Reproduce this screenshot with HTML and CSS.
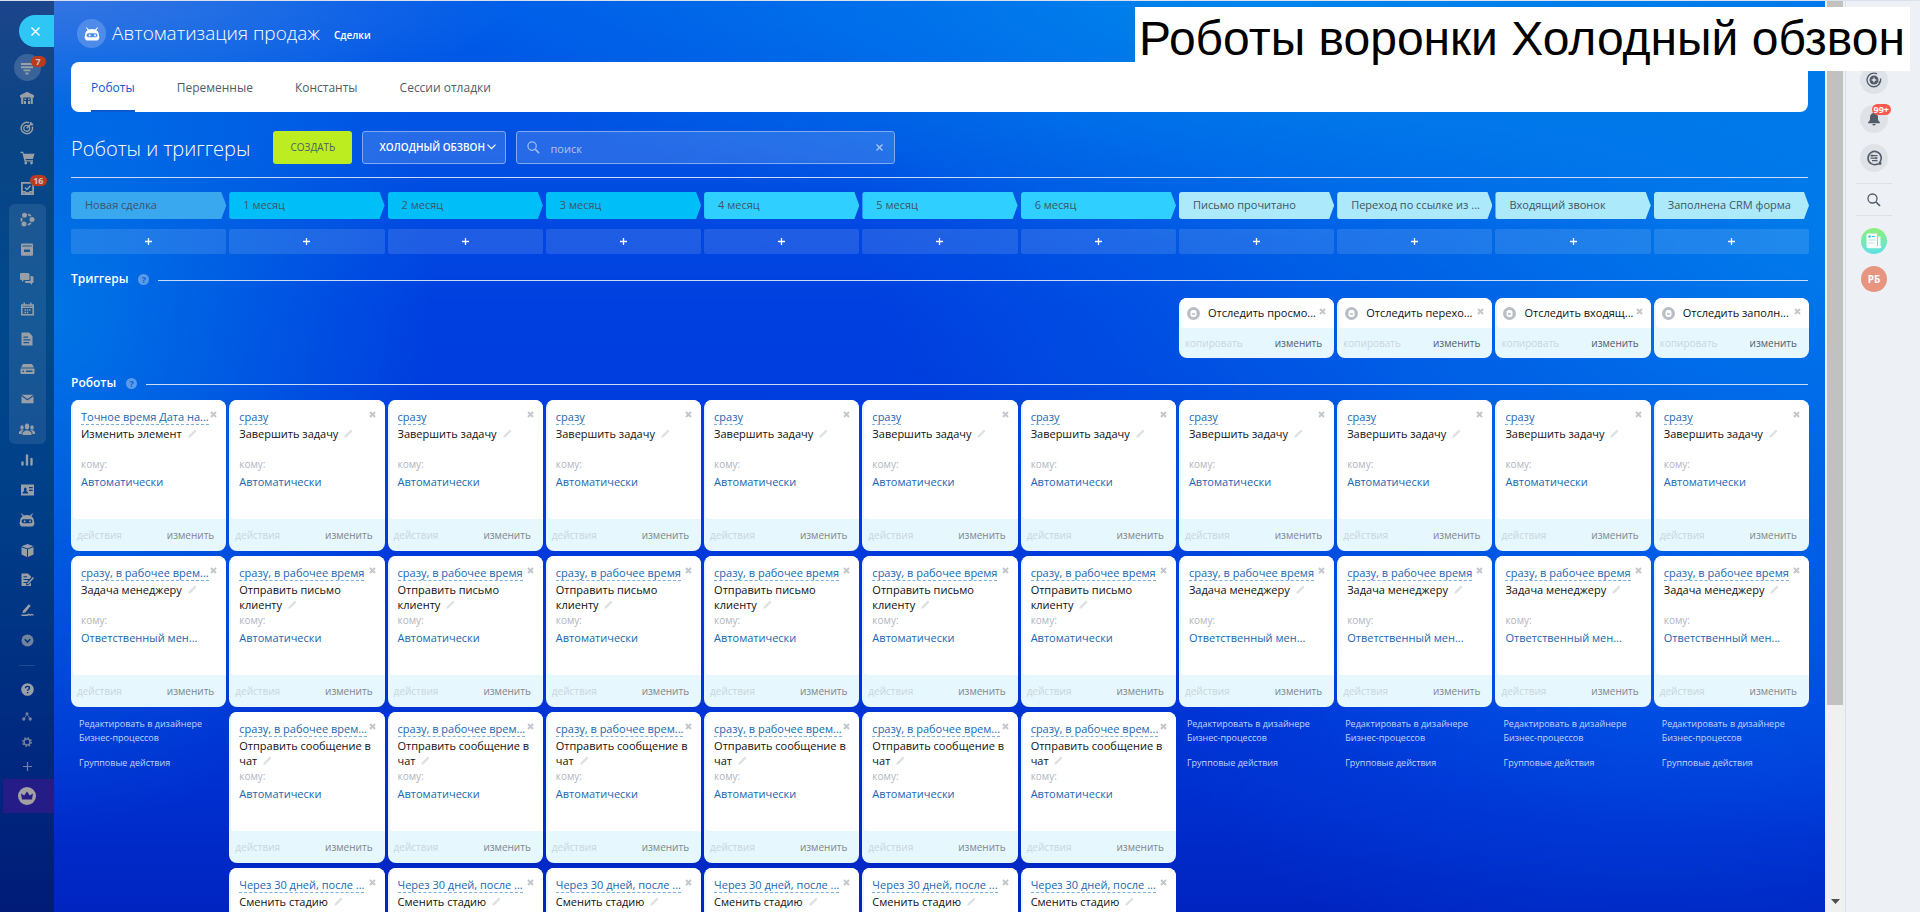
FILE: index.html
```html
<!DOCTYPE html>
<html lang="ru">
<head>
<meta charset="utf-8">
<title>Автоматизация продаж</title>
<link rel="stylesheet" href="styles.css">
</head>
<body>
<svg width="0" height="0" class="sprite" aria-hidden="true">
  <symbol id="robot" viewBox="0 0 16 14"><path fill="currentColor" fill-rule="evenodd" d="M2.6.2 4.8 2.6C6.700 1.900 9.300 1.900 11.200 2.600L13.400.2 14 .8 12.300 3.300C14.300 4.600 15 6.500 15 8.500V9C15.600 9.300 15.600 11 15 11.400 14.600 13 13.500 13.600 12 13.600H4C2.500 13.600 1.400 13 1 11.400.4 11 .4 9.300 1 9V8.500C1 6.500 1.700 4.600 3.700 3.300L2 .8ZM4.500 6.300C2.900 6.300 2.600 7.400 2.600 8.300S3.200 10.300 4.500 10.300H11.500C12.800 10.300 13.400 9.300 13.400 8.300S13.100 6.300 11.500 6.300ZM5.300 7.400a1 1 0 1 1 0 1.900 1 1 0 0 1 0-1.900ZM10.700 7.400a1 1 0 1 1 0 1.900 1 1 0 0 1 0-1.900Z"/></symbol>
  <symbol id="lens" viewBox="0 0 14 14"><circle cx="5.500" cy="5.500" r="4.500" fill="none" stroke="currentColor" stroke-width="1.300"/><path d="m9 9 4 4" stroke="currentColor" stroke-width="1.700"/></symbol>
</svg>
<div class="app">
  <nav class="sidebar" aria-label="Главное меню">
    <button class="close" aria-label="Закрыть"><svg width="9" height="9" viewBox="0 0 9 9"><path d="m.5.5 8 8m0-8-8 8" stroke="#fff" stroke-width="1.400"/></svg></button>
    <a class="item round" href="#" aria-label="Фильтр"><svg width="14" height="14" viewBox="0 0 14 14"><path d="M1 3h12M1 6.200h12M3.500 9.400h7M5.500 12.500h3" stroke="currentColor" stroke-width="1.900"/></svg><span class="badge">7</span></a>
    <a class="item" href="#" aria-label="Главная"><svg width="14" height="14" viewBox="0 0 14 14"><path fill="currentColor" fill-rule="evenodd" d="M7 .8 14 4.200V6.500H12.800V13H1.200V6.500H0V4.200ZM3.300 6.500V13H4V10H6V13H8V10H10V13H10.700V6.500ZM4.500 7.500H6V9H4.500ZM8 7.500H9.500V9H8Z"/></svg></a>
    <a class="item" href="#" aria-label="Цели"><svg width="14" height="14" viewBox="0 0 14 14" fill="none" stroke="currentColor"><path d="M9 1.800A5.700 5.700 0 1 0 12.300 5.500" stroke-width="1.500"/><circle cx="6.700" cy="7.300" r="3" stroke-width="1.200"/><path d="M6.700 7.300 12 2M10.500 1l.3 2.300 2.500.3" stroke-width="1.500"/></svg></a>
    <a class="item" href="#" aria-label="Магазин"><svg width="15" height="14" viewBox="0 0 15 14"><path fill="currentColor" d="M.5.8H3l.9 2H14.500L12.900 8H5.500l.2 1.200H13v1.300H4.500L2.400 2.100H.5Z"/><circle cx="5.800" cy="12" r="1.400" fill="currentColor"/><circle cx="11.500" cy="12" r="1.400" fill="currentColor"/></svg></a>
    <a class="item" href="#" aria-label="Задачи"><svg width="13" height="13" viewBox="0 0 13 13" fill="none" stroke="currentColor"><path d="M.9.900H12.100V12.100H.9ZM1 9.800H4L5 11H8L9 9.800H12" stroke-width="1.700"/><path d="m4 5.500 2 2L9.500 3.800" stroke-width="1.500"/></svg><span class="badge">16</span></a>
    <div class="group">
      <a class="item" href="#" aria-label="CRM"><svg width="15" height="15" viewBox="0 0 15 15"><g fill="currentColor"><circle cx="4.500" cy="3.200" r="2.500"/><circle cx="12" cy="7.500" r="2.500"/><circle cx="4" cy="12" r="2.500"/></g><path d="M8 2.300 11 4M8 13l3-2M1.500 6v3.500" stroke="currentColor" stroke-width="1.800"/></svg></a>
      <a class="item" href="#" aria-label="Лента"><svg width="12" height="13" viewBox="0 0 12 13"><path fill="currentColor" fill-rule="evenodd" d="M0 1.500Q0 .5 1 .5H11Q12 .5 12 1.500V12Q12 12.800 11 12.800H1Q0 12.800 0 12ZM1.300 3.500H10.700V2.500H1.300ZM3 6.500V9H9V6.500Z"/></svg></a>
      <a class="item" href="#" aria-label="Чаты"><svg width="14" height="14" viewBox="0 0 14 14"><path fill="currentColor" d="M1 1H8Q9.500 1 9.500 2.500V7Q9.500 8 8.500 8H4L2 10V8H1Q0 8 0 7V2Q0 1 1 1ZM10.500 4H12Q13.500 4 13.500 5.500V10Q13.500 11 12.500 11H12V13L10 11H6Q5 11 4.800 9H9.500Q10.500 9 10.500 8Z"/></svg></a>
      <a class="item" href="#" aria-label="Календарь"><svg width="13" height="14" viewBox="0 0 13 14"><path fill="none" stroke="currentColor" stroke-width="1.500" d="M.8 3H12.200V12.800H.8ZM3.300.5V4M9.700.5V4M1 5.300H12"/><path d="M3.500 8h6M3.500 10.500h4" stroke="currentColor" stroke-width="1.400" stroke-dasharray="1.500 .8"/></svg></a>
      <a class="item" href="#" aria-label="Документы"><svg width="12" height="14" viewBox="0 0 12 14"><path fill="currentColor" fill-rule="evenodd" d="M1 .5H8L11.500 4V13.500H1Q.5 13.500.5 13V1Q.5.5 1 .5ZM2.500 4.500V5.700H7V4.500ZM2.500 7.200V8.400H9.500V7.200ZM2.500 10V11.200H8V10Z"/></svg></a>
      <a class="item" href="#" aria-label="Диск"><svg width="15" height="12" viewBox="0 0 15 12"><path fill="currentColor" fill-rule="evenodd" d="M3 1H12L14 4.500H1ZM.5 5.500H14.500V10Q14.500 11 13.500 11H1.500Q.5 11 .5 10ZM2.500 7.500V9H4V7.500ZM6 7.500V9H12.500V7.500Z"/></svg></a>
      <a class="item" href="#" aria-label="Почта"><svg width="13" height="10" viewBox="0 0 13 10"><path fill="currentColor" d="M.5.8H12.500L6.500 5ZM.5 2.300 6.500 6.500 12.500 2.300V9.200H.5Z"/></svg></a>
      <a class="item" href="#" aria-label="Группы"><svg width="16" height="13" viewBox="0 0 16 13" fill="currentColor"><ellipse cx="8" cy="3.500" rx="2.200" ry="2.900"/><ellipse cx="3" cy="4.500" rx="1.700" ry="2.200"/><ellipse cx="13" cy="4.500" rx="1.700" ry="2.200"/><path d="M3.500 12V9.500L6.500 7.500H9.500L12.500 9.500V12ZM0 11V9L2 7.300H5L2.700 9V11ZM16 11V9L14 7.300H11L13.300 9V11Z"/></svg></a>
    </div>
    <a class="item" href="#" aria-label="Аналитика"><svg width="12" height="12" viewBox="0 0 12 12"><path stroke="currentColor" stroke-width="2.400" stroke-linecap="round" d="M1.500 8.500v2M6 1.500v9M10.500 5v5.500"/></svg></a>
    <a class="item" href="#" aria-label="Контакты"><svg width="13" height="12" viewBox="0 0 13 12"><path fill="currentColor" fill-rule="evenodd" d="M0 .5H13V11.500H0ZM1.300 9.500H7.300Q7 7.500 5.300 7 6 5.500 5.300 4 4.300 2.800 3.300 4 2.600 5.500 3.300 7 1.500 7.500 1.300 9.500ZM8 3V4.300H11.700V3ZM8 5.700V7H11.700V5.700Z"/></svg></a>
    <a class="item" href="#" aria-label="Роботы"><svg width="16" height="14"><use href="#robot"/></svg></a>
    <a class="item" href="#" aria-label="Склад"><svg width="13" height="13" viewBox="0 0 13 13" fill="currentColor"><path d="M6.500 0 12.500 2.200 6.500 4.500.5 2.200ZM.5 3.200 6 5.300V13L.5 10.500ZM12.500 3.200 7 5.300V13L12.500 10.500Z"/></svg></a>
    <a class="item" href="#" aria-label="Подпись"><svg width="13" height="14" viewBox="0 0 13 14"><path fill="currentColor" fill-rule="evenodd" d="M.5.500H7L10 3.500V4.500L8.500 6H2.500V7H7.500L6 9H2.500V10H5.500L5 12.500 7.500 12 10 9.500V13H.5ZM2.500 3.200V4.200H6V3.200Z"/><path d="m6.500 11 6-6.500" stroke="currentColor" stroke-width="1.500"/></svg></a>
    <a class="item" href="#" aria-label="Маркер"><svg width="13" height="13" viewBox="0 0 13 13"><path fill="currentColor" d="M7.800.3 9.700 1.700 4.300 8.500 1.500 9.300 2 6.800ZM.5 10.500H6Q8 8.500 9 10.500 10.500 9 12.500 10.500V11.800Q10.500 10.500 9 12 8 10.500 6.500 12H.5Z"/></svg></a>
    <a class="item dim" href="#" aria-label="Ещё"><svg width="13" height="13" viewBox="0 0 13 13"><circle cx="6.500" cy="6.500" r="6" fill="currentColor"/><path d="m3.800 5.300 2.700 2.700 2.700-2.700" fill="none" stroke="#00357f" stroke-width="1.600"/></svg></a>
    <hr class="side-rule">
    <a class="item" href="#" aria-label="Помощь"><svg width="13" height="13" viewBox="0 0 13 13"><circle cx="6.500" cy="6.500" r="6.300" fill="currentColor"/><path d="M4.500 5.200Q4.500 3.400 6.500 3.400T8.500 5.100Q8.500 6 7.300 6.500 6.600 6.900 6.600 7.800M6.600 8.900v1.400" fill="none" stroke="#002e7f" stroke-width="1.400"/></svg></a>
    <a class="item small dim" href="#" aria-label="Структура"><svg width="10" height="9" viewBox="0 0 10 9" fill="currentColor"><circle cx="5" cy="1.700" r="1.500"/><circle cx="1.800" cy="7" r="1.700"/><circle cx="8.200" cy="7" r="1.700"/><path d="M5 2 2 7M5 2l3 5" stroke="currentColor" stroke-width=".8"/></svg></a>
    <a class="item small dim" href="#" aria-label="Настройки"><svg width="10" height="10" viewBox="0 0 10 10"><circle cx="5" cy="5" r="3" fill="none" stroke="currentColor" stroke-width="1.500"/><circle cx="5" cy="5" r="4.300" fill="none" stroke="currentColor" stroke-width="1.400" stroke-dasharray="1.700 1.677"/></svg></a>
    <a class="item small dim" href="#" aria-label="Добавить"><svg width="9" height="9" viewBox="0 0 9 9"><path d="M4.500 0v9M0 4.500h9" stroke="currentColor" stroke-width="1.200"/></svg></a>
    <a class="crown" href="#" aria-label="Тариф"><svg width="18" height="18" viewBox="0 0 18 18"><circle cx="9" cy="9" r="9" fill="#a3a1a0"/><path d="M4 12.500 3 6.500 6.200 8.500 9 4.500 11.800 8.500 15 6.500 14 12.500Z" fill="#251c88"/></svg></a>
  </nav>

  <main class="panel">
    <header class="head">
      <span class="head-icon"><svg width="16" height="14"><use href="#robot"/></svg></span>
      <h1>Автоматизация продаж</h1>
      <a href="#">Сделки</a>
    </header>
    <nav class="tabs" aria-label="Разделы">
      <a class="active" href="#">Роботы</a><a href="#">Переменные</a><a href="#">Константы</a><a href="#">Сессии отладки</a>
    </nav>
    <div class="toolbar">
      <h2>Роботы и триггеры</h2>
      <button class="create">СОЗДАТЬ</button>
      <label class="funnel"><select aria-label="Воронка"><option>ХОЛОДНЫЙ ОБЗВОН</option></select><svg width="9" height="6" viewBox="0 0 9 6"><path d="m.5.700 4 4 4-4" fill="none" stroke="#fff" stroke-width="1.200"/></svg></label>
      <div class="search"><svg width="13" height="13"><use href="#lens"/></svg><input type="text" aria-label="Поиск" placeholder="поиск"><button aria-label="Очистить"><svg width="7" height="7" viewBox="0 0 7 7"><path d="m.5.5 6 6m0-6-6 6" stroke="#a9c6f6" stroke-width="1.300"/></svg></button></div>
    </div>
    <div class="cols stages" id="stages"></div>
    <div class="cols adders" id="adders"></div>
    <div class="section"><h3>Триггеры</h3><button class="hint" aria-label="Справка о триггерах">?</button></div>
    <div class="cols triggers" id="triggers"></div>
    <div class="section"><h3>Роботы</h3><button class="hint" aria-label="Справка о роботах">?</button></div>
    <div class="cols robots" id="robots"></div>
  </main>

  <div class="scroll" aria-hidden="true"><div class="thumb"></div><svg width="9" height="5" viewBox="0 0 9 5"><path d="M0 0h9L4.500 5Z" fill="#505050"/></svg></div>

  <aside class="dock">
    <button class="disc" aria-label="Копилот"><svg width="16" height="16" viewBox="0 0 16 16"><circle cx="8" cy="8" r="4.500" fill="#525c69"/><path d="M14.500 6.500A6.800 6.800 0 1 1 11 1.900M14.800 7.500Q14.500 10.500 12.500 10.500" fill="none" stroke="#525c69" stroke-width="1.300"/><path d="m8 5 .9 2.100L11 8l-2.100.9L8 11l-.9-2.100L5 8l2.100-.9Z" fill="#dfe3e8"/></svg></button>
    <button class="disc" aria-label="Уведомления"><svg width="12" height="14" viewBox="0 0 12 14"><path fill="#525c69" d="M6 0Q7 0 7 1 10 2 10 5.500V8L12 10.500V11.200H0V10.500L2 8V5.500Q2 2 5 1 5 0 6 0ZM4.300 12H7.700Q7.500 13.500 6 13.500T4.300 12Z"/></svg><span class="badge">99+</span></button>
    <button class="disc" aria-label="Чаты"><svg width="16" height="16" viewBox="0 0 16 16" fill="none" stroke="#525c69"><path d="M13 13A6.600 6.600 0 1 0 11.500 14H14.500V12" stroke-width="1.600"/><path d="M4.500 5.700h7M4.500 8.200h7M6 10.700h5.500" stroke-width="1.200"/><path d="M6 4.500v2.300M10 7v2.300" stroke-width="1.200"/></svg></button>
    <hr>
    <button class="find" aria-label="Поиск"><svg width="14" height="14"><use href="#lens"/></svg></button>
    <hr>
    <button class="face feed" aria-label="Новости"><svg width="16" height="16" viewBox="0 0 16 16"><path d="M2 .5H11V13H15.500Q15.500 15.300 13.500 15.300H2Q.5 15.300.5 13.500V2Q.5.5 2 .5ZM12 3.500h2.500V13H12Z" fill="#f4fffb"/><circle cx="3.500" cy="3.500" r="1.200" fill="#38bdf0"/><path d="M6 3.500h3" stroke="#38bdf0"/><path d="M2.500 7h7M2.500 10h5" stroke="#cfd8da"/></svg></button>
    <button class="face user">РБ</button>
  </aside>
  <div class="caption">Роботы воронки Холодный обзвон</div>
</div>
<script src="app.js"></script>
</body>
</html>
```
FILE: app.js
```js
const stages = [
  ['Новая сделка', 'new'],
  ['1 месяц', 'early'], ['2 месяц', 'early'], ['3 месяц', 'early'],
  ['4 месяц', 'late'], ['5 месяц', 'late'], ['6 месяц', 'late'],
  ['Письмо прочитано', 'event', 'Отследить просмо...'],
  ['Переход по ссылке из ...', 'event', 'Отследить перехо...'],
  ['Входящий звонок', 'event', 'Отследить входящ...'],
  ['Заполнена CRM форма', 'event', 'Отследить заполн...']
];

const finish = ['сразу', 'Завершить задачу', 'Автоматически'];
const monthly = [
  finish,
  ['сразу, в рабочее время', 'Отправить письмо клиенту', 'Автоматически'],
  ['сразу, в рабочее врем...', 'Отправить сообщение в чат', 'Автоматически'],
  ['Через 30 дней, после ...', 'Сменить стадию', 'Автоматически']
];
const robots = {
  new: [
    ['Точное время Дата на...', 'Изменить элемент', 'Автоматически'],
    ['сразу, в рабочее врем...', 'Задача менеджеру', 'Ответственный мен...']
  ],
  early: monthly,
  late: monthly,
  event: [finish, ['сразу, в рабочее время', 'Задача менеджеру', 'Ответственный мен...']]
};

const cross = '<button class="remove" aria-label="Удалить"><svg width="7" height="7" viewBox="0 0 7 7"><path d="m1 1 5 5m0-5-5 5" stroke="#c3c8cd" stroke-width="2"/></svg></button>';
const pencil = '<svg class="pencil" width="9" height="9" viewBox="0 0 9 9"><path d="m.2 8.800.6-2.300L6.800.5 8.500 2.200 2.500 8.200Z" fill="#dfe2e5"/></svg>';

const robotCard = ([when, name, who]) => `
  <article class="card">
    <div class="card-body">
      <a class="when" href="#">${when}</a>${cross}
      <p class="name">${name} ${pencil}</p>
      <p class="to">кому:</p>
      <a class="who" href="#">${who}</a>
    </div>
    <footer><button class="faint">действия</button><button>изменить</button></footer>
  </article>`;

const triggerCard = text => `
  <article class="card trigger">
    <div class="card-body">
      <svg width="13" height="13" viewBox="0 0 13 13"><circle cx="6.500" cy="6.500" r="6.500" fill="#b9bec6"/><rect x="3.500" y="3" width="6" height="7" rx="2.500" fill="#fff"/><path d="M5 7h3" stroke="#b9bec6" stroke-width="1.500"/></svg>
      <span>${text}</span>${cross}
    </div>
    <footer><button class="faint">копировать</button><button>изменить</button></footer>
  </article>`;

const links = `
  <div class="links">
    <a href="#">Редактировать в дизайнере Бизнес-процессов</a>
    <a href="#">Групповые действия</a>
  </div>`;

const fill = (id, render) => {
  document.getElementById(id).innerHTML = stages.map(render).join('');
};

fill('stages', ([title, kind]) => `<div class="stage ${kind}">${title}</div>`);
fill('adders', ([title]) => `<button aria-label="Добавить: ${title}"><svg width="7" height="7" viewBox="0 0 7 7"><path d="M3.500 0v7M0 3.500h7" stroke="#fff" stroke-width="1.300"/></svg></button>`);
fill('triggers', ([, , text]) => `<div>${text ? triggerCard(text) : ''}</div>`);
fill('robots', ([, kind]) => `<div class="stack">${robots[kind].map(robotCard).join('')}${links}</div>`);
```
FILE: styles.css
```css
* { box-sizing: border-box; }
body {
  margin: 0;
  height: 100vh;
  overflow: hidden;
  font-family: "Open Sans", "Noto Sans", sans-serif;
  font-size: 12px;
  line-height: 16px;
  color: #222;
}
h1, h2, h3, p, hr { margin: 0; font-weight: 400; }
button, input, select { font: inherit; color: inherit; border: 0; padding: 0; background: none; }
a { color: inherit; text-decoration: none; }
svg { display: block; flex: none; }
.sprite { position: absolute; }

.app {
  position: relative;
  display: grid;
  grid-template-columns: 54px minmax(0, 1fr) 21px 74px;
  height: 100vh;
  border-top: 1px solid #dbe0ee;
}

/* left menu */
.sidebar {
  display: flex;
  flex-direction: column;
  align-items: center;
  padding-top: 14px;
  color: #9a9fa6;
  background: linear-gradient(to bottom, #1c458c 0, #0a4484 14%, #00498d 34%, #003f88 55%, #002a80 80%, #001c78 100%);
}
.close {
  align-self: flex-end;
  display: grid;
  place-items: center;
  width: 35px;
  height: 32px;
  margin-bottom: 7px;
  padding-right: 3px;
  border-radius: 16px 0 0 16px;
  background: #2fc6f6;
}
.item { position: relative; display: grid; place-items: center; width: 37px; height: 30px; }
.round { width: 27px; height: 27px; margin-bottom: 2px; border-radius: 50%; background: #3a6499; }
.dim { opacity: .75; }
.small { height: 25px; }
.group { margin: 1px 0; border-radius: 6px; background: rgba(255, 255, 255, .09); }
.badge {
  position: absolute;
  top: 2px;
  right: -4px;
  min-width: 15px;
  height: 11px;
  padding: 0 3px;
  border-radius: 6px;
  background: #b93a1c;
  color: #c8c3c3;
  font-size: 9px;
  font-weight: 700;
  line-height: 11px;
  text-align: center;
}
.item .badge { right: -1px; }
.round .badge { right: -5px; }
.side-rule { width: 16px; border: 0; border-top: 1px solid #1f4d95; margin: 10px 0 8px; }
.crown {
  align-self: flex-end;
  display: grid;
  place-items: center;
  width: 51px;
  height: 34px;
  padding-right: 3px;
  background: #251c88;
}

/* main area */
.panel {
  padding: 18px 17px 0;
  overflow: hidden auto;
  scrollbar-width: none;
  color: #fff;
  background:
    radial-gradient(ellipse 460px 110px at 0 0, rgba(70, 120, 225, .75), transparent),
    radial-gradient(ellipse 800px 240px at 68% 0, rgba(0, 145, 238, .7), transparent),
    radial-gradient(ellipse 380px 520px at 0 34%, rgba(0, 122, 230, .9), transparent),
    radial-gradient(ellipse 1000px 620px at 102% 24%, rgba(0, 128, 236, .95), transparent),
    radial-gradient(ellipse 500px 340px at 90% 72%, rgba(0, 84, 236, .6), transparent),
    linear-gradient(to bottom, #005de8 0, #004fe2 18%, #003fe0 34%, #0038da 68%, #0030d0 86%, #0024c0 100%);
}
.head { display: flex; align-items: center; height: 29px; padding-left: 6px; }
.head-icon { display: grid; place-items: center; width: 29px; height: 29px; margin-right: 6px; border-radius: 50%; background: #4f8cea; }
.head h1 { margin-right: 14px; font-size: 19px; font-weight: 300; line-height: 29px; }
.head a { font-size: 10px; font-weight: 600; padding-top: 3px; }
.tabs {
  display: flex;
  gap: 42px;
  height: 50px;
  margin-top: 14px;
  padding: 0 20px;
  border-radius: 8px;
  background: #fff;
  color: #525c69;
  line-height: 51px;
}
.tabs .active { color: #1058d0; border-bottom: 2px solid #1058d0; }
.toolbar {
  display: flex;
  align-items: center;
  height: 66px;
  padding-top: 5px;
  border-bottom: 1px solid #c8dcf8;
}
.toolbar h2 { margin-right: 23px; padding-top: 3px; font-size: 20px; font-weight: 300; }
.create { width: 79px; height: 33px; border-radius: 3px; background: #bbed21; color: #535c69; font-size: 10px; }
.funnel, .search { display: flex; align-items: center; height: 33px; border: 1px solid #7fa9f2; border-radius: 3px; background: rgba(255, 255, 255, .15); }
.funnel { width: 144px; margin: 0 10px; padding: 0 9px 0 16px; }
.funnel select { flex: 1; min-width: 0; appearance: none; font-size: 10px; font-weight: 600; }
.funnel option { color: #222; }
.search { width: 379px; padding: 0 11px 0 10px; color: #9dbdf4; }
.search input { flex: 1; min-width: 0; padding: 3px 0 0 10px; outline: 0; font-size: 11px; }
.search input::placeholder { color: #b3c4e4; opacity: 1; }

.cols { display: grid; grid-template-columns: repeat(11, minmax(0, 1fr)); gap: 3px; margin-right: -1px; }
.stages { margin-top: 14px; }
.stage {
  height: 27px;
  padding-left: 14px;
  border-radius: 3px;
  color: #3f5566;
  font-size: 11px;
  line-height: 26px;
  white-space: nowrap;
  clip-path: polygon(0 0, calc(100% - 5px) 0, 100% 50%, calc(100% - 5px) 100%, 0 100%);
}
.new { background: #39a8ef; }
.early { background: #00bff8; }
.late { background: #2fd0ff; }
.event { background: #ace9fb; }
.adders { margin-top: 10px; }
.adders button { display: grid; place-items: center; height: 25px; border-radius: 2px; background: rgba(255, 255, 255, .12); }

.section { display: flex; align-items: center; margin-top: 17px; height: 16px; }
.section::after { content: ""; flex: 1; height: 1px; margin: 3px 0 0 9px; background: #c8dcf8; }
.section h3 { font-size: 12px; font-weight: 600; }
.hint { width: 11px; height: 11px; margin-left: 10px; border-radius: 50%; background: #5a9ce8; color: #0b5fd8; font-size: 9px; font-weight: 700; line-height: 11px; }
.triggers { margin-top: 11px; }
.robots { margin-top: 9px; }

.stack { display: flex; flex-direction: column; gap: 5px; }
.card { position: relative; border-radius: 8px; background: #e6f7fd; color: #111; font-size: 11px; overflow: hidden; }
.card-body { min-height: 119px; margin-left: 2px; padding: 10px 8px 0; border-radius: 0 0 0 3px; background: #fff; }
.card footer { display: flex; justify-content: space-between; align-items: center; height: 32px; padding: 0 12px 0 6px; color: #80868e; font-size: 10px; }
.card .faint { color: #c9d6dd; }
.when { display: inline-block; height: 15px; border-bottom: 1px dashed #7fb0dd; color: #2067b0; line-height: 14px; white-space: nowrap; vertical-align: top; }
.remove { position: absolute; top: 11px; right: 9px; }
.name { height: 32px; line-height: 15px; }
.pencil { display: inline-block; margin-left: 3px; }
.to { color: #b0b5c0; font-size: 10px; line-height: 12px; }
.who { display: block; margin-top: 4px; color: #2067b0; white-space: nowrap; }
.trigger .card-body { display: flex; align-items: center; gap: 8px; min-height: 30px; padding: 0 0 0 6px; white-space: nowrap; }
.trigger footer { height: 30px; color: #525c69; }
.trigger .remove { top: 10px; right: 8px; }
.links { padding: 5px 8px; color: #c5d6f8; font-size: 9px; line-height: 14px; }
.links a { display: block; margin-bottom: 11px; }

/* scrollbar strip */
.scroll { display: flex; flex-direction: column; justify-content: space-between; align-items: center; padding: 0 2px 8px; background: #f0f0f0; border-right: 1px solid #d5e2ec; }
.thumb { width: 100%; height: 78%; background: #c1c1c1; }

/* right dock */
.dock { display: flex; flex-direction: column; align-items: center; padding: 65px 18px 0 0; background: #edf1f5; }
.dock hr { width: 36px; border: 0; border-top: 1px solid #dde1e6; }
.disc { position: relative; display: grid; place-items: center; width: 28px; height: 28px; margin-bottom: 11px; border-radius: 50%; background: #dfe3e8; }
.disc .badge { top: -1px; right: -3px; padding: 0 2px; background: #ff5752; color: #fff; }
.find { padding: 9px 0 8px; color: #525c69; }
.face { width: 26px; height: 26px; margin-top: 12px; border-radius: 50%; color: #fff; font-size: 10px; font-weight: 700; }
.feed { display: grid; place-items: center; background: linear-gradient(to bottom, #8df07c, #5fe0e8); }
.user { background: #e69680; }

.caption {
  position: absolute;
  top: 6px;
  right: 10px;
  padding: 0 5px 0 4px;
  background: #fff;
  color: #000;
  font-family: "Liberation Sans", Arial, sans-serif;
  font-size: 48px;
  line-height: 64px;
  white-space: nowrap;
}
```
